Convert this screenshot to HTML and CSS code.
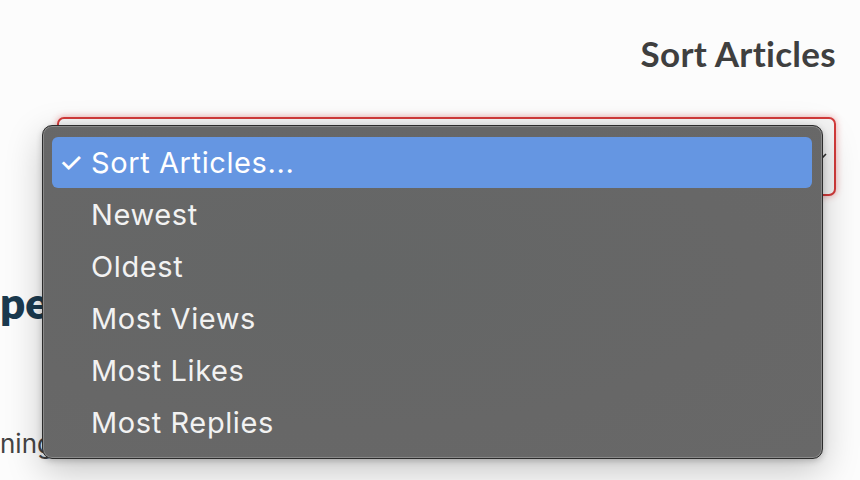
FILE: index.html
```html
<!DOCTYPE html>
<html>
<head>
<meta charset="utf-8">
<link rel="stylesheet" href="styles.css">
</head>
<body>
<div class="page">
  <div class="sort-block">
    <h2 class="sort-title">Sort Articles</h2>
    <div class="select-box">
      <svg class="chevron" width="16" height="10" viewBox="0 0 16 10"><path d="M2 2 L8 8 L14 2" fill="none" stroke="#333" stroke-width="1.6"/></svg>
    </div>
  </div>
  <h1 class="section-title">pe</h1>
  <p class="intro">ning</p>

  <div class="menu">
    <div class="item selected"><span class="check">✓</span>Sort Articles...</div>
    <div class="item">Newest</div>
    <div class="item">Oldest</div>
    <div class="item">Most Views</div>
    <div class="item">Most Likes</div>
    <div class="item">Most Replies</div>
  </div>
</div>
</body>
</html>
```

FILE: styles.css
```css
html, body {
  margin: 0;
  padding: 0;
  background: #ffffff;
}
.page {
  position: relative;
  width: 860px;
  height: 480px;
  overflow: hidden;
  background: #fcfcfc;
}
.sort-block {
  display: flex;
  flex-direction: column;
  align-items: flex-end;
  padding: 32px 24px 0 57px;
}
.sort-title {
  margin: 0;
  font-family: "Lato", sans-serif;
  font-weight: 700;
  font-size: 35px;
  line-height: 42px;
  letter-spacing: 0.3px;
  color: #3f3f3f;
}
.select-box {
  margin-top: 43px;
  align-self: stretch;
  height: 75px;
  border: 2px solid #d23a3a;
  border-radius: 7px;
  background: #f4f4f4;
  box-shadow: 0 0 7px rgba(220, 60, 60, 0.45);
  display: flex;
  align-items: center;
  justify-content: flex-end;
  padding-right: 6px;
}
.chevron {
  display: block;
}
.section-title {
  margin: 81px 0 0 0;
  font-family: "Lato", sans-serif;
  font-weight: 800;
  font-size: 44px;
  line-height: 50px;
  color: #1b3a4f;
}
.intro {
  margin: 101px 0 0 0;
  font-family: "Inter", sans-serif;
  font-size: 26px;
  line-height: 32px;
  color: #444;
}
.menu {
  position: absolute;
  left: 42px;
  top: 125px;
  width: 760px;
  height: 312px;
  padding: 10px 10px 10px 9px;
  background: radial-gradient(ellipse at 40% 45%, #646666 0%, #676767 60%, #686868 100%);
  border: 1px solid #2c2c2c;
  border-radius: 10px;
  box-shadow: inset 0 0 0 1px #8a8a8a, 0 12px 36px rgba(0,0,0,0.22), 0 2px 6px rgba(0,0,0,0.2);
  display: flex;
  flex-direction: column;
}
.item {
  height: 52px;
  display: flex;
  align-items: center;
  padding-left: 39px;
  font-family: "Inter", sans-serif;
  font-size: 29px;
  letter-spacing: 0.6px;
  color: #f2f2f2;
  border-radius: 6px;
  position: relative;
}
.item.selected {
  background: #6596e2;
  color: #ffffff;
  height: 51px;
  margin-top: 1px;
}
.check {
  position: absolute;
  left: 7px;
  font-size: 27px;
  font-weight: 500;
}
```
